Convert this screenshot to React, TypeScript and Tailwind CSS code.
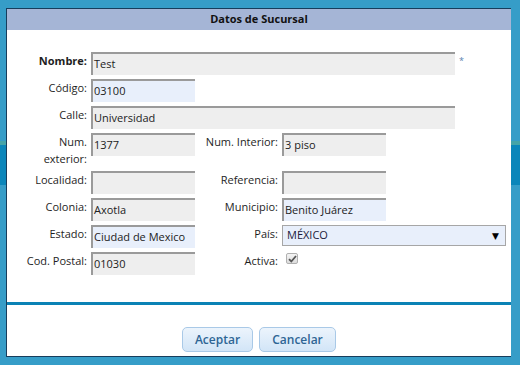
import React from "react";

const font = { fontFamily: '"Open Sans", "DejaVu Sans", sans-serif' };

function Label({ children, bold }: { children: React.ReactNode; bold?: boolean }) {
  return (
    <div className={`text-right text-[11px] leading-[17px] text-[#1e1e1e] ${bold ? "font-bold" : ""}`}>
      {children}
    </div>
  );
}

function Input({ value, blue, w = "w-[104px]" }: { value?: string; blue?: boolean; w?: string }) {
  return (
    <div
      className={`${w} h-[23px] border-t-2 border-l-2 border-[#9a9a9a] ${blue ? "bg-[#e8effb]" : "bg-[#eeeeee]"} flex items-center pl-[1px] text-[11px] text-[#222]`}
    >
      {value}
    </div>
  );
}

export default function App() {
  return (
    <div className="relative h-[365px] w-[520px] overflow-hidden bg-[#369dc8]" style={font}>
      <div className="h-[141px]" />
      <div className="h-[4px] bg-[#45a4a8]" />
      <div className="h-[40px] bg-[#0b86ba]" />

      <div className="absolute left-[6px] top-[8px] w-[505px] h-[349px] border-l border-t border-b border-[#173d5c] bg-white flex flex-col">
        <div className="h-[21px] bg-[#a5b5d6] flex items-center justify-center text-[11px] font-bold text-[#111]">
          Datos de Sucursal
        </div>

        <div className="pt-[22px] pl-[14px]">
          <div className="grid grid-cols-[66px_104px_79px_224px] gap-x-[4px] gap-y-[4px]">
            <Label bold>Nombre:</Label>
            <div className="col-span-3 flex items-start">
              <Input value="Test" w="w-[364px]" />
              <span className="ml-[4px] mt-[4px] text-[9px] leading-[9px] text-[#5a7fb0]">*</span>
            </div>

            <Label>Código:</Label>
            <div className="col-span-3">
              <Input value="03100" blue />
            </div>

            <Label>Calle:</Label>
            <div className="col-span-3">
              <Input value="Universidad" w="w-[364px]" />
            </div>

            <Label>
              Num.
              <br />
              exterior:
            </Label>
            <Input value="1377" />
            <Label>Num. Interior:</Label>
            <Input value="3 piso" />

            <Label>Localidad:</Label>
            <Input />
            <Label>Referencia:</Label>
            <Input />

            <Label>Colonia:</Label>
            <Input value="Axotla" />
            <Label>Municipio:</Label>
            <Input value="Benito Juárez" blue />

            <Label>Estado:</Label>
            <Input value="Ciudad de Mexico" blue />
            <Label>País:</Label>
            <div className="w-[224px] h-[21px] border border-[#a6a6a6] bg-[#e8effb] flex items-center justify-between pl-[4px] pr-[6px] text-[11px] text-[#1a1a3a]">
              <span>MÉXICO</span>
              <span className="text-[9px] text-black">▼</span>
            </div>

            <Label>Cod. Postal:</Label>
            <Input value="01030" />
            <Label>Activa:</Label>
            <div className="pt-[1px] pl-[4px]">
              <div className="w-[12px] h-[11px] border border-[#b0b0b0] rounded-[2px] bg-gradient-to-b from-[#f4f4f4] to-[#dcdcdc] flex items-center justify-center">
                <svg width="9" height="8" viewBox="0 0 9 8">
                  <path d="M1 4.2 L3.3 6.5 L8 1" fill="none" stroke="#555" strokeWidth="1.8" />
                </svg>
              </div>
            </div>
          </div>
        </div>

        <div className="mt-[27px] h-[3px] bg-[#0a82b5]" />

        <div className="mt-[22px] flex justify-center gap-[6px]">
          <button className="w-[71px] h-[25px] rounded-[5px] border border-[#a9c9e7] bg-gradient-to-b from-[#ecf4fc] to-[#d2e5f7] text-[12px] font-semibold text-[#2e6594]">
            Aceptar
          </button>
          <button className="w-[77px] h-[25px] rounded-[5px] border border-[#a9c9e7] bg-gradient-to-b from-[#ecf4fc] to-[#d2e5f7] text-[12px] font-semibold text-[#2e6594]">
            Cancelar
          </button>
        </div>
      </div>
    </div>
  );
}
